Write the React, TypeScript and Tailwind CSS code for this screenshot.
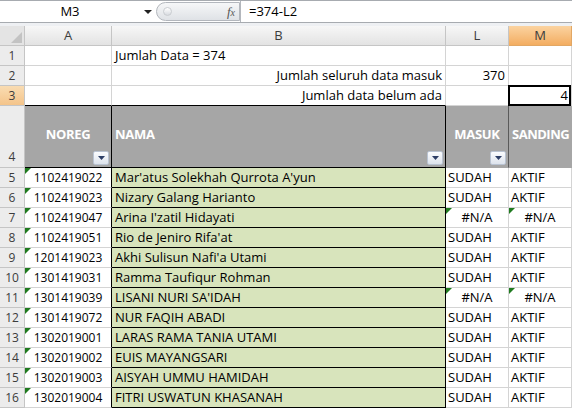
import type { ReactNode } from 'react';

const rows = [
  { no: 5, reg: '1102419022', nama: "Mar'atus Solekhah Qurrota A'yun", masuk: 'SUDAH', sanding: 'AKTIF' },
  { no: 6, reg: '1102419023', nama: 'Nizary Galang Harianto', masuk: 'SUDAH', sanding: 'AKTIF' },
  { no: 7, reg: '1102419047', nama: "Arina I'zatil Hidayati", masuk: '#N/A', sanding: '#N/A' },
  { no: 8, reg: '1102419051', nama: "Rio de Jeniro Rifa'at", masuk: 'SUDAH', sanding: 'AKTIF' },
  { no: 9, reg: '1201419023', nama: "Akhi Sulisun Nafi'a Utami", masuk: 'SUDAH', sanding: 'AKTIF' },
  { no: 10, reg: '1301419031', nama: 'Ramma Taufiqur Rohman', masuk: 'SUDAH', sanding: 'AKTIF' },
  { no: 11, reg: '1301419039', nama: "LISANI NURI SA'IDAH", masuk: '#N/A', sanding: '#N/A' },
  { no: 12, reg: '1301419072', nama: 'NUR FAQIH ABADI', masuk: 'SUDAH', sanding: 'AKTIF' },
  { no: 13, reg: '1302019001', nama: 'LARAS RAMA TANIA UTAMI', masuk: 'SUDAH', sanding: 'AKTIF' },
  { no: 14, reg: '1302019002', nama: 'EUIS MAYANGSARI', masuk: 'SUDAH', sanding: 'AKTIF' },
  { no: 15, reg: '1302019003', nama: 'AISYAH UMMU HAMIDAH', masuk: 'SUDAH', sanding: 'AKTIF' },
  { no: 16, reg: '1302019004', nama: 'FITRI USWATUN KHASANAH', masuk: 'SUDAH', sanding: 'AKTIF' },
];

function Flag() {
  return <span className="absolute left-0 top-0 h-0 w-0 border-t-[6px] border-r-[6px] border-t-[#1f7a1f] border-r-transparent" />;
}

function FilterBtn() {
  return (
    <span className="absolute bottom-[2px] right-[2px] flex h-[14px] w-[16px] items-center justify-center rounded-[2px] border border-[#b9c3d2] bg-gradient-to-b from-[#fbfcfe] to-[#dde3ec]">
      <svg width="7" height="4" viewBox="0 0 7 4">
        <path d="M0 0h7L3.5 4z" fill="#2d3e66" />
      </svg>
    </span>
  );
}

function RowHead({ children, active, bottom }: { children: ReactNode; active?: boolean; bottom?: boolean }) {
  return (
    <div
      className={`flex justify-center border-r border-b border-[#c5c5c5] text-[12px] text-[#3c3c3c] ${bottom ? 'items-end pb-[1px]' : 'items-center'} ${
        active ? 'bg-gradient-to-b from-[#f9dcb2] to-[#f4c48a]' : 'bg-[#ececec]'
      }`}
    >
      {children}
    </div>
  );
}

const grid = 'border-r border-b border-[#d4d4d4]';

export default function App() {
  return (
    <div className="h-[409px] w-[572px] overflow-hidden bg-white text-[13px] text-black" style={{ fontFamily: '"Open Sans", sans-serif' }}>
      {/* formula bar */}
      <div className="flex h-[23px] border-t border-b border-[#a7abb0] bg-white">
        <div className="relative flex w-[156px] items-center justify-center">
          <span className="-ml-4">M3</span>
          <svg className="absolute right-[4px] top-[9px]" width="8" height="4" viewBox="0 0 8 4">
            <path d="M0 0h8L4 4z" fill="#222" />
          </svg>
        </div>
        <div className="my-[1px] flex w-[84px] items-center rounded-l-full border border-[#b3b7bd] bg-gradient-to-b from-[#f6f7f8] to-[#dfe2e6] pl-[6px]">
          <span className="h-[9px] w-[9px] rounded-full border border-[#c9ccd0] bg-gradient-to-b from-white to-[#d8dbe0]" />
          <span className="ml-auto mr-[4px] italic text-[#555]" style={{ fontFamily: '"Liberation Serif", serif' }}>
            f<span className="text-[10px]">x</span>
          </span>
        </div>
        <div className="flex flex-1 items-center border-l border-[#b3b7bd] pl-[8px]">=374-L2</div>
      </div>
      <div className="h-[3px] bg-[#eef0f3]" />

      {/* sheet */}
      <div className="grid grid-cols-[25px_87px_334px_63px_1fr] grid-rows-[20px_20px_20px_20px_62px_repeat(12,20px)]">
        {/* column headers */}
        <div className="relative border-r border-b border-[#c5c5c5] bg-[#e4e4e4]">
          <svg className="absolute bottom-[2px] right-[2px]" width="11" height="11" viewBox="0 0 11 11">
            <path d="M11 0V11H0z" fill="#c3c3c3" />
          </svg>
        </div>
        <div className="flex items-center justify-center border-r border-b border-[#c5c5c5] bg-gradient-to-b from-[#f7f7f7] to-[#e3e3e3] text-[#3c3c3c]">A</div>
        <div className="flex items-center justify-center border-r border-b border-[#c5c5c5] bg-gradient-to-b from-[#f7f7f7] to-[#e3e3e3] text-[#3c3c3c]">B</div>
        <div className="flex items-center justify-center border-r border-b border-[#c5c5c5] bg-gradient-to-b from-[#f7f7f7] to-[#e3e3e3] text-[#3c3c3c]">L</div>
        <div className="flex items-center justify-center border-r border-b border-[#e2a764] bg-gradient-to-b from-[#fbd3a0] to-[#f3ad60] text-[#3c3c3c]">M</div>

        {/* row 1 */}
        <RowHead>1</RowHead>
        <div className={grid} />
        <div className={`${grid} flex items-center pl-[3px]`}>Jumlah Data = 374</div>
        <div className={grid} />
        <div className={grid} />

        {/* row 2 */}
        <RowHead>2</RowHead>
        <div className={grid} />
        <div className={`${grid} flex items-center justify-end pr-[3px]`}>Jumlah seluruh data masuk</div>
        <div className={`${grid} flex items-center justify-end pr-[3px]`}>370</div>
        <div className={grid} />

        {/* row 3 */}
        <RowHead active>3</RowHead>
        <div className="border-r border-b border-r-[#d4d4d4] border-b-black" />
        <div className="flex items-center justify-end border-r border-b border-r-[#d4d4d4] border-b-black pr-[3px]">Jumlah data belum ada</div>
        <div className={grid} />
        <div className={`${grid} relative flex items-center justify-end pr-[3px]`}>
          4
          <span className="absolute -left-[1px] -top-[1px] bottom-[-1px] right-0 border-2 border-black" />
        </div>

        {/* row 4 header */}
        <RowHead bottom>4</RowHead>
        <div className="relative flex items-center justify-center border-r border-b border-black bg-[#a6a6a6] pb-[4px] font-bold tracking-[-0.3px] text-white">
          NOREG
          <FilterBtn />
        </div>
        <div className="relative flex items-center border-r border-b border-black bg-[#a6a6a6] pb-[4px] pl-[3px] font-bold tracking-[-0.3px] text-white">
          NAMA
          <FilterBtn />
        </div>
        <div className="relative flex items-center justify-center border-r border-b border-r-[#5a5a5a] border-b-[#a6a6a6] bg-[#a6a6a6] pb-[4px] font-bold tracking-[-0.3px] text-white">
          MASUK
          <FilterBtn />
        </div>
        <div className="flex items-center border-r border-b border-[#a6a6a6] bg-[#a6a6a6] pb-[4px] pl-[3px] font-bold tracking-[-0.5px] text-white">SANDING</div>

        {rows.map((r) => {
          const na = r.masuk === '#N/A';
          return [
            <RowHead key={`h${r.no}`}>{r.no}</RowHead>,
            <div key={`a${r.no}`} className="relative flex items-center justify-center border-r border-b border-r-black border-b-[#d4d4d4] text-[12px]">
              <Flag />
              {r.reg}
            </div>,
            <div key={`b${r.no}`} className="flex items-center border-r border-b border-black bg-[#d8e4bc] pl-[3px]">
              {r.nama}
            </div>,
            <div key={`l${r.no}`} className={`${grid} relative flex items-center ${na ? 'justify-center' : 'pl-[2px]'}`}>
              {na && <Flag />}
              {r.masuk}
            </div>,
            <div key={`m${r.no}`} className={`${grid} relative flex items-center ${na ? 'justify-center' : 'pl-[2px]'}`}>
              {na && <Flag />}
              {r.sanding}
            </div>,
          ];
        })}
      </div>
    </div>
  );
}
